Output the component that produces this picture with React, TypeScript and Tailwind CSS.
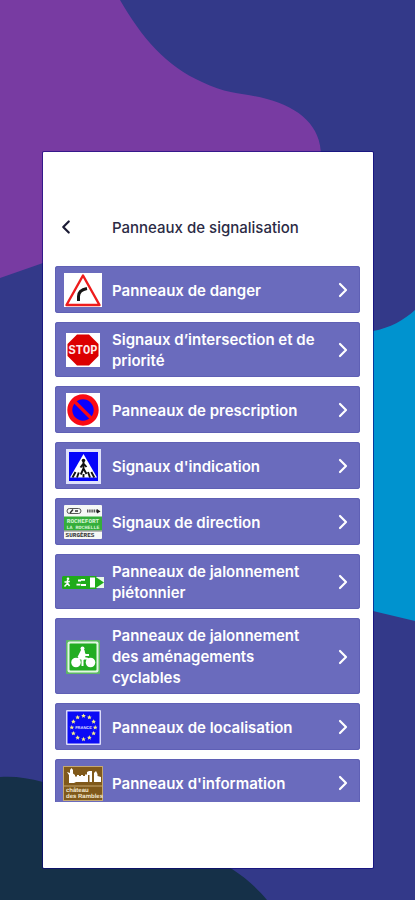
import React from 'react';
import { ChevronLeft, ChevronRight } from 'lucide-react';

interface Category {
  id: string;
  label: string;
  icon: React.ReactNode;
}

const DangerSign = () => (
  <svg width="38" height="34" viewBox="0 0 38 34" aria-hidden="true">
    <rect width="38" height="34" fill="#fff" />
    <path d="M19 2.5L35.5 32H2.5Z" fill="#fff" stroke="#ee1c1c" strokeWidth="2.4" strokeLinejoin="round" />
    <path d="M14.5 28V23.5C14.5 19 17.5 16.5 23 15.5" fill="none" stroke="#151515" strokeWidth="3" />
  </svg>
);

const StopSign = () => (
  <svg width="34" height="34" viewBox="0 0 34 34" aria-hidden="true">
    <rect width="34" height="34" fill="#fff" />
    <path d="M11 1.5H23L32.5 11V23L23 32.5H11L1.5 23V11Z" fill="#dc0000" />
    <text
      x="17"
      y="21"
      textAnchor="middle"
      fill="#ffe9e9"
      className="font-['Liberation_Mono',monospace] text-[12px] font-bold"
    >
      STOP
    </text>
  </svg>
);

const NoParkingSign = () => (
  <svg width="34" height="34" viewBox="0 0 34 34" aria-hidden="true">
    <rect width="34" height="34" fill="#fff" />
    <circle cx="17" cy="17" r="13.2" fill="#0a00ff" stroke="#fa0a14" strokeWidth="5" />
    <path d="M8 8L26 26" stroke="#fa0a14" strokeWidth="3.2" />
  </svg>
);

const CrossingSign = () => (
  <svg width="35" height="35" viewBox="0 0 35 35" aria-hidden="true">
    <rect width="35" height="35" fill="#dfe1fb" />
    <rect x="3" y="3" width="29" height="29" fill="#0505fa" />
    <path d="M17.5 5L31 28.5H4Z" fill="#fff" />
    <circle cx="17.5" cy="11.5" r="1.8" fill="#111" />
    <path
      d="M17.5 13V20M17.5 14.5L14.5 18.5M17.5 14.5L20.5 18M17.5 19.5L14.8 25.5M17.5 19.5L20.5 25"
      stroke="#111"
      strokeWidth="1.9"
      fill="none"
    />
    <path d="M9.5 23L6.5 28.5M12.8 23.5L11 28.5M17.5 25V28.5M22 23L24 28.5M25.3 23L28.3 28.5" stroke="#111" strokeWidth="1.9" />
  </svg>
);

const DirectionSign = () => (
  <svg width="38" height="34" viewBox="0 0 38 34" aria-hidden="true">
    <rect width="38" height="34" rx="1" fill="#f6f8f6" />
    <rect x="3" y="3.5" width="14" height="5" rx="2.5" fill="none" stroke="#555" strokeWidth="1" />
    <path d="M6 8L9 4.5M11 6H14" stroke="#333" strokeWidth="1.4" />
    <path d="M23 6H33" stroke="#555" strokeWidth="3" strokeDasharray="1.4 .8" />
    <path d="M33 4L36.5 6.5L33 8.5Z" fill="#222" />
    <rect y="11.5" width="38" height="14" fill="#35ae3b" />
    <text
      x="19"
      y="18"
      textAnchor="middle"
      fill="#d9f5d9"
      textRendering="geometricPrecision"
      className="font-['Liberation_Mono',monospace] text-[6px] font-bold"
    >
      ROCHEFORT
    </text>
    <text
      x="19"
      y="24"
      textAnchor="middle"
      fill="#d9f5d9"
      textRendering="geometricPrecision"
      className="font-['Liberation_Mono',monospace] text-[5px] font-bold"
    >
      LA ROCHELLE
    </text>
    <path d="M0 26H38" stroke="#777" strokeWidth="1" />
    <text
      x="16"
      y="32"
      textAnchor="middle"
      fill="#333"
      textRendering="geometricPrecision"
      className="font-['Liberation_Mono',monospace] text-[6px] font-bold"
    >
      SURGÈRES
    </text>
  </svg>
);

const WalkingSign = () => (
  <svg width="42" height="13" viewBox="0 0 42 13" aria-hidden="true">
    <rect width="35" height="13" rx="1.5" fill="#1fab1a" />
    <rect x="33" y="1" width="9" height="11" fill="#e9faea" />
    <path d="M33 .5L42 6.5L33 12.5Z" fill="#1fab1a" />
    <circle cx="6" cy="2.8" r="1.3" fill="#fff" />
    <path
      d="M5.5 4V7.5M2.5 6L7.8 5.5M5.5 7.2L2.5 10.5M5.5 7.2L7.6 10"
      stroke="#fff"
      strokeWidth="1.5"
      fill="none"
    />
    <path d="M16 4.5H19M19 3.8H23M14.5 8.7H18.500M19 9H24" stroke="#fff" strokeWidth="1.8" />
    <rect x="28" y="1.5" width="5" height="10" fill="#fff" />
  </svg>
);

const CyclingSign = () => (
  <svg width="34" height="34" viewBox="0 0 34 34" aria-hidden="true">
    <rect width="34" height="34" rx="1" fill="#5cb865" />
    <rect x="1.5" y="1.5" width="31" height="31" rx="2" fill="#e2f7e2" />
    <rect x="3.5" y="3.5" width="27" height="27" rx="1" fill="#22ad22" />
    <circle cx="10" cy="22.5" r="4.8" fill="#fff" />
    <circle cx="24.5" cy="22.5" r="4.8" fill="#fff" />
    <circle cx="16.5" cy="8.5" r="2" fill="#fff" />
    <path d="M15 10H18.5L19.5 18L17.5 20V26H15.5V19.5L11.5 17Z" fill="#fff" />
    <path d="M17 11L19 15H23M12 18.5H21L24.5 22.5" stroke="#fff" strokeWidth="2" fill="none" strokeLinejoin="round" />
  </svg>
);

const EU_STARS = Array.from({ length: 12 }, (_, i) => {
  const angle = (i * Math.PI) / 6;
  return { x: 17.5 + 11.7 * Math.sin(angle), y: 17.5 - 11.7 * Math.cos(angle) };
});

const EuropeSign = () => (
  <svg width="35" height="35" viewBox="0 0 35 35" aria-hidden="true">
    <rect width="35" height="35" rx="1" fill="#dcdcfa" />
    <rect x="1.5" y="1.5" width="32" height="32" fill="#0b0bf5" />
    {EU_STARS.map((star, i) => (
      <path
        key={i}
        d="M0-2.4L.7-.8L2.3-.7L1.1.4L1.5 2L0 1.1L-1.5 2L-1.1.4L-2.3-.7L-.7-.8Z"
        fill="#f5ee8a"
        transform={`translate(${star.x} ${star.y})`}
      />
    ))}
    <text
      x="17.5"
      y="19"
      textAnchor="middle"
      fill="#e4e4ff"
      textRendering="geometricPrecision"
      className="font-['Liberation_Sans',sans-serif] text-[4px] font-bold"
    >
      FRANCE
    </text>
  </svg>
);

const CastleSign = () => (
  <svg width="40" height="35" viewBox="0 0 40 35" aria-hidden="true">
    <rect width="40" height="35" fill="#c5a871" />
    <rect x="1" y="1" width="38" height="33" fill="#80591a" />
    <path
      d="M4 6L7 7V4L8.5 2L10 4V7.5L12 9V10.500H14V9H16V10H18V9H20V10H22V8.500H24V6L26 5H29V16H26.500V9H25V16H13L11 17H6V9Z"
      fill="#fff"
    />
    <path d="M31 16V7L33 5L34.5 8V10L38 11V16Z" fill="#fff" />
    <path d="M0 20H40" stroke="#c5a871" strokeWidth="1" />
    <text
      x="3"
      y="26"
      fill="#f3e8d0"
      textRendering="geometricPrecision"
      className="font-['Liberation_Sans',sans-serif] text-[6px] font-bold"
    >
      château
    </text>
    <text
      x="3"
      y="32"
      fill="#f3e8d0"
      textRendering="geometricPrecision"
      className="font-['Liberation_Sans',sans-serif] text-[6px] font-bold"
    >
      des Rambles
    </text>
  </svg>
);

const categories: Category[] = [
  { id: 'danger', label: 'Panneaux de danger', icon: <DangerSign /> },
  { id: 'intersection', label: 'Signaux d’intersection et de priorité', icon: <StopSign /> },
  { id: 'prescription', label: 'Panneaux de prescription', icon: <NoParkingSign /> },
  { id: 'indication', label: "Signaux d'indication", icon: <CrossingSign /> },
  { id: 'direction', label: 'Signaux de direction', icon: <DirectionSign /> },
  { id: 'pietons', label: 'Panneaux de jalonnement piétonnier', icon: <WalkingSign /> },
  { id: 'cyclables', label: 'Panneaux de jalonnement des aménagements cyclables', icon: <CyclingSign /> },
  { id: 'localisation', label: 'Panneaux de localisation', icon: <EuropeSign /> },
  { id: 'information', label: "Panneaux d'information", icon: <CastleSign /> },
];

const Backdrop = () => (
  <svg
    className="absolute inset-0 -z-10 h-full w-full"
    viewBox="0 0 415 900"
    preserveAspectRatio="none"
    aria-hidden="true"
  >
    <rect width="415" height="900" fill="#333989" />
    <path d="M0 0H120C142 38 166 66 202 82C228 95 246 93 267 99C300 108 321 126 321 156V200L43 263L0 278Z" fill="#783ba2" />
    <path d="M415 310C404 320 390 328 373 331C330 345 300 400 300 470C300 550 330 600 373 611L415 621Z" fill="#0093cf" />
    <path d="M0 777C15 776 28 778 43 782C80 800 130 835 180 850C200 856 216 860 232 869C246 878 258 889 267 900H0Z" fill="#153048" />
  </svg>
);

const CategoryRow: React.FC<{ category: Category }> = ({ category }) => (
  <button
    type="button"
    className="flex min-h-[47px] w-full items-center gap-2 rounded-[3px] bg-[#6a6bbd] pt-[7px] pr-[5px] pb-[6px] pl-[7px] text-left text-white inset-ring inset-ring-[#5f60b5]"
  >
    <span className="-my-1 flex w-[42px] shrink-0 justify-center">{category.icon}</span>
    <span className="min-w-0 flex-1 text-[15px] leading-[21px] font-semibold">{category.label}</span>
    <ChevronRight className="size-6 shrink-0" strokeWidth={2.2} aria-hidden="true" />
  </button>
);

export default function App() {
  return (
    <main className="relative isolate flex h-screen flex-col pt-[152px] pr-[42px] pb-8 pl-[43px] font-['Inter','Noto_Sans',sans-serif]">
      <Backdrop />
      <section className="flex min-h-0 flex-1 flex-col rounded-[1px] bg-white px-3 pt-[60px] pr-[13px] pb-[66px] ring-1 ring-[#08007c]/60">
        <header className="mb-6 flex h-[30px] items-center">
          <button type="button" aria-label="Retour" className="flex w-[57px] shrink-0 text-[#1b1b35]">
            <ChevronLeft className="size-[22px]" strokeWidth={2.4} aria-hidden="true" />
          </button>
          <h1 className="text-[15px] leading-[21px] font-medium text-[#2b2b45]">
            Panneaux de signalisation
          </h1>
        </header>
        <ul className="flex min-h-0 flex-1 flex-col gap-[9px] overflow-hidden">
          {categories.map(category => (
            <li key={category.id} className="shrink-0">
              <CategoryRow category={category} />
            </li>
          ))}
        </ul>
      </section>
    </main>
  );
}
